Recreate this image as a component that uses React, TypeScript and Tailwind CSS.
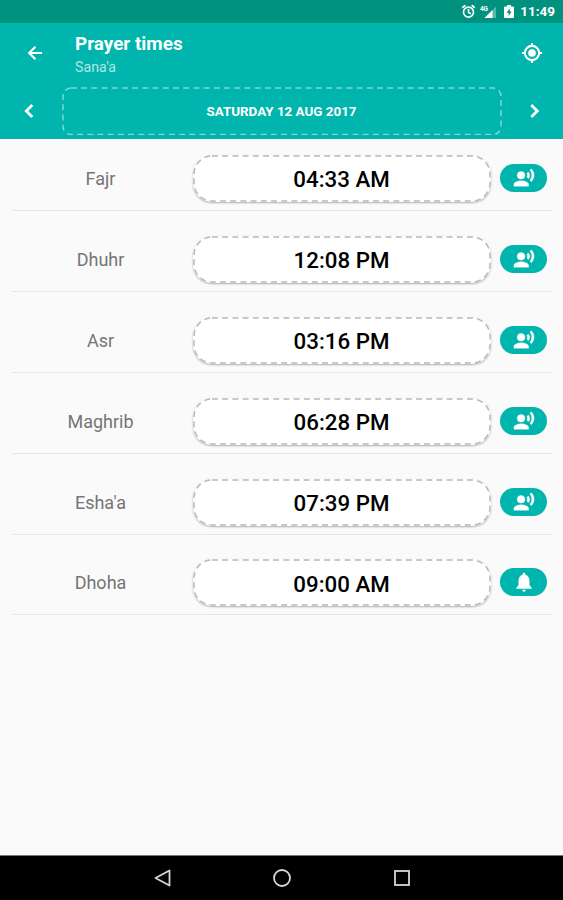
import type { ReactNode } from "react";

type Prayer = {
  name: string;
  time: string;
  alert: "voice" | "bell";
};

const PRAYERS: Prayer[] = [
  { name: "Fajr", time: "04:33 AM", alert: "voice" },
  { name: "Dhuhr", time: "12:08 PM", alert: "voice" },
  { name: "Asr", time: "03:16 PM", alert: "voice" },
  { name: "Maghrib", time: "06:28 PM", alert: "voice" },
  { name: "Esha'a", time: "07:39 PM", alert: "voice" },
  { name: "Dhoha", time: "09:00 AM", alert: "bell" },
];

function LineIcon({ size, width = 2.6, children }: { size: number; width?: number; children: ReactNode }) {
  return (
    <svg width={size} height={size} viewBox="0 0 24 24" fill="none" stroke="currentColor" strokeWidth={width}>
      {children}
    </svg>
  );
}

function VoiceIcon() {
  return (
    <svg width="22" height="22" viewBox="0 0 24 24" fill="currentColor" stroke="currentColor" strokeWidth="0.4">
      <circle cx="8.8" cy="9" r="4.2" />
      <path d="M9 15c-2.67 0-8 1.34-8 4v2h16v-2c0-2.66-5.33-4-8-4zm7.76-9.64l-1.68 1.69c.84 1.18.84 2.71 0 3.89l1.68 1.69c2.02-2.02 2.02-5.07 0-7.27zM20.07 2l-1.63 1.63c2.77 3.02 2.77 7.56 0 10.74L20.07 16c3.9-3.89 3.91-9.95 0-14z" />
    </svg>
  );
}

function BellIcon() {
  return (
    <svg width="22" height="22" viewBox="0 0 24 24" fill="currentColor">
      <path d="M10 20.4h4c0 1.2-.9 2.1-2 2.1s-2-.9-2-2.1zM18 15.5V11c0-3.3-1.6-6-4.5-6.8V3.5a1.5 1.5 0 0 0-3 0v.7C7.6 5 6 7.7 6 11v4.5L3.7 18v1.4h16.6V18z" />
    </svg>
  );
}

function StatusBar() {
  return (
    <div className="flex h-[23px] shrink-0 items-center justify-end bg-[#00917f] pr-2 text-white">
      <div className="mr-[4px]">
        <LineIcon size={15}>
          <circle cx="12" cy="13" r="8" />
          <path d="M12 8v5.5l4 2.200M2 6l5-4M22 6l-5-4" />
        </LineIcon>
      </div>
      <svg width="17" height="15" viewBox="0 0 17 15" className="mr-[6px]">
        <path d="M16 2.5V14H4.5Z" fill="#fff" fillOpacity="0.35" />
        <path d="M12.5 6V14H4.500Z" fill="#fff" />
        <text x="0" y="6.5" fontSize="6.5" fontWeight="700" fill="#fff" textLength="8">
          4G
        </text>
      </svg>
      <svg width="12" height="15" viewBox="0 0 12 15" className="mr-[5px]">
        <path d="M4 1h4v1.5h2q1 0 1 1v9.5q0 1-1 1H2q-1 0-1-1V3.5q0-1 1-1h2z" fill="#fff" />
        <path d="M6.8 4.5L3.6 8.7h2v3.3l3-4.5H6.8z" fill="#00917f" />
      </svg>
      <span className="text-[13.5px] leading-none font-bold">11:49</span>
    </div>
  );
}

function Header() {
  return (
    <header className="h-[116px] shrink-0 bg-[#00b5ad] text-white">
      <div className="flex h-[59px] items-center pr-[20px] pl-[25px]">
        <button type="button" aria-label="Back" className="w-[50px]">
          <LineIcon size={20}>
            <path d="M20.500 12H5.500M12.500 4.500L5 12l7.500 7.500" />
          </LineIcon>
        </button>
        <div className="flex-1">
          <h1 className="mt-[4px] text-[18.9px] leading-[22px] font-bold">Prayer times</h1>
          <p className="mt-[2px] text-[14.2px] leading-[20px] text-white/70">Sana'a</p>
        </div>
        <button type="button" aria-label="Location">
          <LineIcon size={22} width={2.3}>
            <circle cx="12" cy="12" r="7.8" />
            <circle cx="12" cy="12" r="4.2" fill="currentColor" stroke="none" />
            <path d="M12 1v3.500M12 19.500V23M1 12h3.500M19.500 12H23" />
          </LineIcon>
        </button>
      </div>
      <div className="flex h-[57px] items-center justify-between px-[16px]">
        <button type="button" aria-label="Previous day">
          <LineIcon size={26}>
            <path d="M15 6.500L9.500 12l5.500 5.500" />
          </LineIcon>
        </button>
        <div className="relative flex h-[48px] w-[440px] items-center justify-center">
          <svg className="absolute inset-0" width="440" height="48" fill="none">
            <rect
              x="1"
              y="1"
              width="438"
              height="46.5"
              rx="8"
              stroke="#7dd8d4"
              strokeWidth="1.5"
              strokeDasharray="6 4.2"
            />
          </svg>
          <span className="pt-[3px] text-[13.4px] leading-none font-bold">SATURDAY 12 AUG 2017</span>
        </div>
        <button type="button" aria-label="Next day">
          <LineIcon size={26}>
            <path d="M9.500 6.500L15 12l-5.500 5.500" />
          </LineIcon>
        </button>
      </div>
    </header>
  );
}

function PrayerRow({ prayer }: { prayer: Prayer }) {
  return (
    <li className="flex h-[72px] items-start border-b border-[#e6e6e6] pt-4">
      <span className="w-[177px] text-center text-[18px] leading-[48px] text-[#757575]">
        {prayer.name}
      </span>
      <div className="relative ml-[4px] flex h-[47px] w-[298px] items-center justify-center rounded-[19px] bg-white shadow-[0_1px_2px_rgba(0,0,0,0.3)]">
        <svg className="absolute inset-0" width="298" height="47" fill="none">
          <rect
            x="1"
            y="1"
            width="296"
            height="45"
            rx="18"
            stroke="#b8b8b8"
            strokeWidth="1.5"
            strokeDasharray="6 4.2"
          />
        </svg>
        <span className="pt-[2px] pr-px text-[22.3px] leading-none font-medium text-black">{prayer.time}</span>
      </div>
      <button
        type="button"
        aria-label={`${prayer.name} alert`}
        className="mt-[9px] ml-[9px] flex h-[28px] w-[47px] items-center justify-center rounded-full bg-[#00b5ad] text-white"
      >
        {prayer.alert === "bell" ? <BellIcon /> : <VoiceIcon />}
      </button>
    </li>
  );
}

function NavBar() {
  return (
    <nav className="flex h-[45px] shrink-0 items-center justify-center gap-[100px] border-t border-[#777] bg-black">
      <svg width="20" height="20" viewBox="0 0 20 20" fill="none" stroke="#d6d6d6" strokeWidth="1.8">
        <path d="M17.5 2.5V17.5L3.5 10Z" strokeLinejoin="round" />
      </svg>
      <svg width="20" height="20" viewBox="0 0 20 20" fill="none" stroke="#d6d6d6" strokeWidth="1.8">
        <circle cx="10" cy="10" r="8" />
      </svg>
      <svg width="20" height="20" viewBox="0 0 20 20" fill="none" stroke="#d6d6d6" strokeWidth="1.8">
        <rect x="3" y="3" width="14" height="14" />
      </svg>
    </nav>
  );
}

export default function App() {
  return (
    <div className="flex h-[900px] w-[563px] flex-col overflow-hidden bg-[#fafafa] font-[Roboto,sans-serif]">
      <StatusBar />
      <Header />
      <ul className="flex flex-1 flex-col gap-[8.9px] pr-[11px] pl-[12px]">
        {PRAYERS.map((prayer) => (
          <PrayerRow key={prayer.name} prayer={prayer} />
        ))}
      </ul>
      <NavBar />
    </div>
  );
}
